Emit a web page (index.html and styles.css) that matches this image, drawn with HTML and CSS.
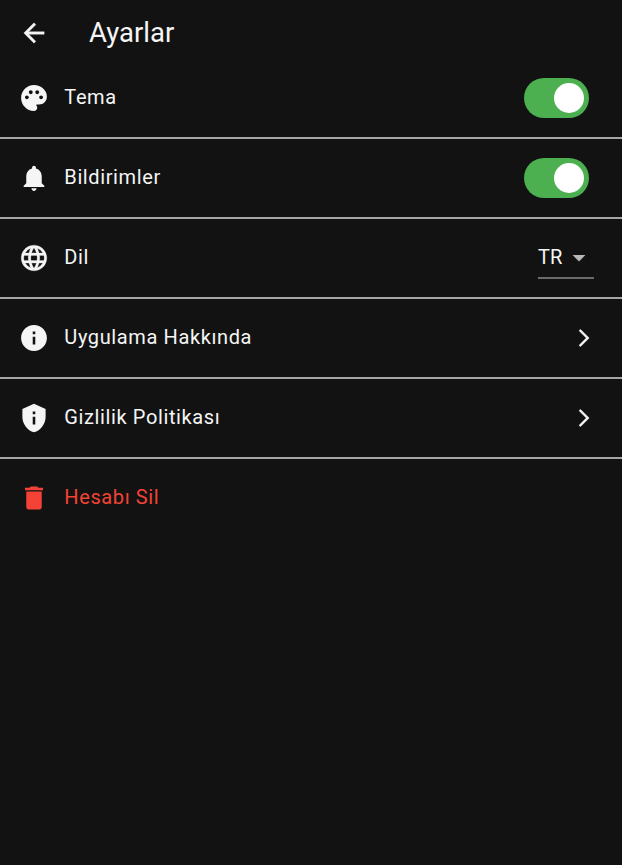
FILE: index.html
```html
<!DOCTYPE html>
<html lang="tr">
<head>
<meta charset="utf-8">
<title>Ayarlar</title>
<link rel="stylesheet" href="styles.css">
</head>
<body>
<header class="bar">
<svg class="back" viewBox="-0.6 -0.6 25.2 25.2"><path d="M20 11H7.83l5.59-5.59L12 4l-8 8 8 8 1.41-1.41L7.83 13H20z"/></svg>
<h1>Ayarlar</h1>
</header>
<main>
<div class="row">
<svg class="icon" viewBox="-0.4 -0.4 24.8 24.8"><path d="M12 2C6.49 2 2 6.49 2 12s4.49 10 10 10c1.38 0 2.5-1.12 2.5-2.5 0-.61-.23-1.2-.64-1.67-.08-.1-.13-.21-.13-.33 0-.28.22-.5.5-.5H16c3.31 0 6-2.69 6-6 0-4.96-4.49-9-10-9zm5.5 11c-.83 0-1.5-.67-1.5-1.5s.67-1.5 1.5-1.5 1.5.67 1.5 1.5-.67 1.5-1.5 1.5zm-3-4c-.83 0-1.5-.67-1.5-1.5S13.67 6 14.5 6s1.5.67 1.5 1.5S15.33 9 14.5 9zM5 11.5c0-.83.67-1.5 1.5-1.5s1.5.67 1.5 1.5S7.33 13 6.5 13 5 12.33 5 11.5zm6-4c0 .83-.67 1.5-1.5 1.5S8 8.33 8 7.5 8.67 6 9.5 6s1.5.67 1.5 1.5z"/></svg>
<span class="label">Tema</span><span class="switch"><span class="thumb"></span></span>
</div>
<div class="row">
<svg class="icon" viewBox="-0.4 -0.4 24.8 24.8"><path d="M12 22c1.1 0 2-.9 2-2h-4c0 1.1.9 2 2 2zm6-6v-5c0-3.07-1.63-5.64-4.5-6.32V4c0-.83-.67-1.5-1.5-1.5s-1.5.67-1.5 1.5v.68C7.64 5.36 6 7.92 6 11v5l-2 2v1h16v-1l-2-2z"/></svg>
<span class="label">Bildirimler</span><span class="switch"><span class="thumb"></span></span>
</div>
<div class="row">
<svg class="icon globe" viewBox="-0.5 -0.5 25 25"><path d="M11.99 2C6.47 2 2 6.48 2 12s4.47 10 9.99 10C17.52 22 22 17.52 22 12S17.52 2 11.99 2zm6.93 6h-2.95a15.65 15.65 0 0 0-1.38-3.56A8.03 8.03 0 0 1 18.92 8zM12 4.04c.83 1.2 1.48 2.53 1.91 3.96h-3.82c.43-1.43 1.08-2.76 1.91-3.96zM4.26 14C4.1 13.36 4 12.69 4 12s.1-1.36.26-2h3.38c-.08.66-.14 1.32-.14 2s.06 1.34.14 2H4.26zm.82 2h2.95c.32 1.25.78 2.45 1.38 3.56A7.987 7.987 0 0 1 5.08 16zm2.95-8H5.08a7.987 7.987 0 0 1 4.33-3.56A15.65 15.65 0 0 0 8.03 8zM12 19.96c-.83-1.2-1.48-2.53-1.91-3.96h3.82c-.43 1.43-1.08 2.76-1.91 3.96zM14.34 14H9.66c-.09-.66-.16-1.32-.16-2s.07-1.35.16-2h4.68c.09.65.16 1.32.16 2s-.07 1.34-.16 2zm.25 5.56c.6-1.11 1.06-2.31 1.38-3.56h2.95a8.03 8.03 0 0 1-4.33 3.56zM16.36 14c.08-.66.14-1.32.14-2s-.06-1.34-.14-2h3.38c.16.64.26 1.31.26 2s-.1 1.36-.26 2h-3.38z"/></svg>
<span class="label">Dil</span>
<span class="select">TR<svg viewBox="-0.4 -0.8 24.8 24.8"><path d="M7 10l5 5 5-5z"/></svg></span>
</div>
<div class="row">
<svg class="icon" viewBox="-0.4 -0.4 24.8 24.8"><path d="M12 2C6.48 2 2 6.48 2 12s4.48 10 10 10 10-4.48 10-10S17.52 2 12 2zm1 15h-2v-6h2v6zm0-8h-2V7h2v2z"/></svg>
<span class="label">Uygulama Hakkında</span><svg class="chevron" viewBox="-0.5 -0.5 25 25"><path d="M6.23 20.23 8 22l10-10L8 2 6.23 3.77 14.46 12z"/></svg>
</div>
<div class="row">
<svg class="icon" viewBox="-0.4 -0.4 24.8 24.8"><path d="M12 1L3 5v6c0 5.55 3.84 10.74 9 12 5.16-1.26 9-6.45 9-12V5l-9-4zm1 16h-2v-6h2v6zm0-8h-2V7h2v2z"/></svg>
<span class="label">Gizlilik Politikası</span><svg class="chevron" viewBox="-0.5 -0.5 25 25"><path d="M6.23 20.23 8 22l10-10L8 2 6.23 3.77 14.46 12z"/></svg>
</div>
<div class="row danger">
<svg class="icon" viewBox="-0.4 -0.4 24.8 24.8"><path d="M6 19c0 1.1.9 2 2 2h8c1.1 0 2-.9 2-2V7H6v12zM19 4h-3.5l-1-1h-5l-1 1H5v2h14V4z"/></svg>
<span class="label">Hesabı Sil</span>
</div>
</main>
</body>
</html>
```
FILE: styles.css
```css
* { box-sizing: border-box; }
body { margin: 0; min-height: 865px; background: #121212; color: #f5f5f5; font-family: Roboto, sans-serif; }
svg { display: block; flex: none; fill: currentColor; }
.bar { height: 59px; padding: 7px 0 0 18px; display: flex; align-items: center; }
.back { width: 32px; height: 32px; stroke: currentColor; stroke-width: .3; }
h1 { margin: 0 0 0 39px; font-size: 27.5px; line-height: 36px; font-weight: 400; }
.row { height: 80px; display: flex; align-items: center; padding: 0 33px 0 18px; border-bottom: 2px solid #a6a6a6; }
.row:last-child { border-bottom: 0; height: 78px; }
.icon { width: 32px; height: 32px; }
.globe { stroke: currentColor; stroke-width: .2; }
.label { flex: 1; margin-left: 14.3px; font-size: 20px; line-height: 28px; letter-spacing: .62px; position: relative; top: -1px; }
.switch { width: 65px; height: 40px; border-radius: 20px; background: #4caf50; display: flex; justify-content: flex-end; align-items: center; padding-right: 5px; }
.thumb { width: 30px; height: 30px; border-radius: 50%; background: #fff; }
.select { width: 56px; height: 42px; margin-right: -5px; border-bottom: 2px solid #6b6b6b; display: flex; align-items: center; justify-content: space-between; font-size: 20px; }
.select svg { width: 32px; height: 32px; margin-right: -1px; color: #b8b8b8; }
.chevron { width: 22px; height: 22px; margin-right: -6px; stroke: currentColor; stroke-width: .3; }
.danger { color: #f44336; }
```
